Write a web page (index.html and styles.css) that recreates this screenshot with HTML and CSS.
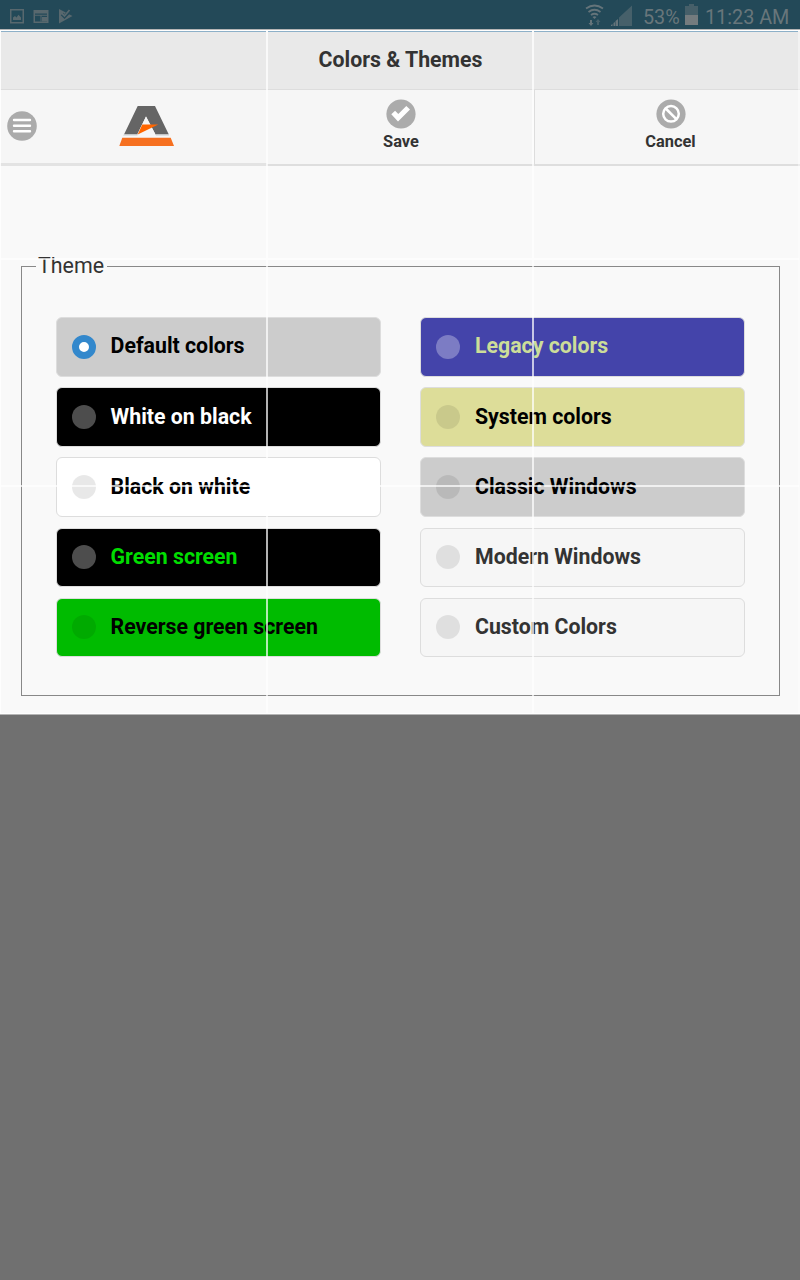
FILE: index.html
```html
<!DOCTYPE html>
<html lang="en">
<head>
<meta charset="utf-8">
<title>Colors &amp; Themes</title>
<link rel="stylesheet" href="styles.css">
</head>
<body>
<div class="statusbar">
  <svg class="status-left" width="80" height="29" viewBox="0 0 80 29" fill="#58686e">
    <path fill-rule="evenodd" d="M10 9h14v14.500h-14zM11.500 10.500v11.500h11v-11.500zM13 20v-2.500l2-1.500 1.500 1.500 2-2.700 2.500 2.700v2.500z"/>
    <path fill-rule="evenodd" d="M33.500 10h15v13h-15zM35 13.500v8h12v-8z"/>
    <path d="M40.500 15h1v6.500h-1zM35 14.800h12v1H35zM42 17h5v4.500h-5z"/>
    <path d="M59 9L72.500 16 59 23.500z"/>
    <path fill="none" stroke="#234958" stroke-width="3.500" d="M62 14l2.500 2.500 6-6"/>
    <path fill="none" stroke="#58686e" stroke-width="1.800" d="M61.500 13l3 3 5-6"/>
  </svg>
  <div class="status-right">
    <svg width="50" height="29" viewBox="0 0 50 29">
      <g fill="none" stroke="#65747a" stroke-width="1.800">
        <path d="M1 8.500q8.500-6 17 0M3.500 12q6-4.500 12 0M6 15q3.500-2.500 7 0"/>
      </g>
      <path fill="#65747a" d="M7.500 17q2-1.500 4 0l-2 2zM5 20h2v3h1.500L6 26l-2.500-3H5zM26 26v-1l1.500-1v2zM28.500 26v-3l1.500-1v4zM30.500 26v-5l2.500-2v7z"/>
      <path fill="#46606a" d="M12 25h2v-3h1.500L13 19l-2.500 3H12zM34 26v-8.500L47 5.500V26z"/>
    </svg>
    <span class="percent">53%</span>
    <svg class="battery" width="13" height="29" viewBox="0 0 13 29">
      <path fill="#465f69" d="M0 6h4V4h5v2h4v9H0z"/><path fill="#747b7e" d="M0 15h13v10H0z"/>
    </svg>
    <span class="clock">11:23 AM</span>
  </div>
</div>
<div class="window">
  <header class="title">Colors &amp; Themes</header>
  <nav class="toolbar">
    <div class="tool brand">
      <svg class="menu" width="30" height="30" viewBox="0 0 30 30"><circle cx="15" cy="15" r="14.800" fill="#ababab"/><path d="M7 9h16M7 14.800h16M7 20.300h16" stroke="#fff" stroke-width="2.400" stroke-linecap="round"/></svg>
      <svg class="logo" width="56" height="42" viewBox="119 105 56 42">
        <path fill="#656565" d="M137.700 106h17.300l13.800 28.500h-13.300L146 116.500l-8.700 18H124z"/>
        <path fill="#f5f5f5" d="M146 116.500l-8.700 18h18.200z"/>
        <path fill="#d9dddf" d="M123.500 134.500h14v1.300h-14.500zM155.500 134.500h13.500v1.300h-13z"/>
        <path fill="#ff6600" d="M142.300 124.500h16L137.700 134.500z"/>
        <path fill="#f67020" d="M122.300 137.800h48.400l3.300 8.200h-54.700z"/>
      </svg>
    </div>
    <div class="tool save">
      <svg width="30" height="30" viewBox="0 0 30 30"><circle cx="15" cy="15" r="14.600" fill="#ababab"/><path fill="#fff" d="M5.300 15.200l3.800-3.500 3.200 3.300 8-8 3.700 3.600-12 11.900z"/></svg>
      <span>Save</span>
    </div>
    <div class="tool cancel">
      <svg width="30" height="30" viewBox="0 0 30 30"><circle cx="15" cy="15" r="14.600" fill="#ababab"/><circle cx="15" cy="14.800" r="7.800" fill="none" stroke="#fff" stroke-width="2.500"/><path d="M9.700 9.500l10.700 10.700" stroke="#fff" stroke-width="2.600"/></svg>
      <span>Cancel</span>
    </div>
  </nav>
  <fieldset class="themes">
    <legend>Theme</legend>
    <div class="columns">
      <div class="column">
        <div class="option classic selected"><i></i>Default colors</div>
        <div class="option black"><i></i>White on black</div>
        <div class="option white"><i></i>Black on white</div>
        <div class="option black greentext"><i></i>Green screen</div>
        <div class="option green"><i></i>Reverse green screen</div>
      </div>
      <div class="column second">
        <div class="option legacy"><i></i>Legacy colors</div>
        <div class="option system"><i></i>System colors</div>
        <div class="option classic"><i></i>Classic Windows</div>
        <div class="option"><i></i>Modern Windows</div>
        <div class="option"><i></i>Custom Colors</div>
      </div>
    </div>
  </fieldset>
  <svg class="seams" width="800" height="686" viewBox="0 29 800 686">
    <path fill="#fff" fill-opacity=".7" d="M266 31h2v682h-2zM532 31h2v682h-2zM1 258h798v2H1zM1 485h798v2H1z"/>
    <path fill="#fff" fill-opacity=".85" d="M0 30h800v1H0zM0 30h1v683H0zM798.500 30h1v683h-1zM0 713h800v1H0z"/>
    <path fill="#b5b5b5" d="M0 29h800v1H0zM0 714h800v1H0z"/>
    <path fill="#8db0c8" d="M1 31h265v1H1zM268 31h264v1H268zM534 31h264v1H534z"/>
  </svg>
</div>
</body>
</html>
```
FILE: styles.css
```css
* { box-sizing: border-box; }
body { margin: 0; height: 1280px; overflow: hidden; background: #707070; font-family: Roboto, sans-serif; color: #333; }
.statusbar { height: 29px; background: #234958; color: #68767b; display: flex; justify-content: space-between; }
.statusbar svg { display: block; }
.status-right { display: flex; align-items: flex-start; width: 215px; font-size: 19.800px; line-height: 35px; white-space: nowrap; }
.percent { margin-left: 8px; width: 42px; }
.clock { margin-left: 7px; }
.window { position: relative; height: 686px; background: #f9f9f9; overflow: hidden; }
.title { margin-top: 2px; height: 59px; padding-left: 1px; background: #e9e9e9; border-bottom: 1px solid #ddd; text-align: center; font-size: 21.300px; font-weight: 700; line-height: 57px; }
.toolbar { display: grid; grid-template-columns: 267px 268px 265px; height: 76px; }
.tool { height: 76px; display: flex; flex-direction: column; align-items: center; padding-top: 9px; background: #f6f6f6; border-bottom: 2px solid #dedede; font-size: 16.400px; font-weight: 700; }
.save { border-right: 1px solid #ddd; padding-left: 1px; }
.cancel { padding-left: 6px; }
.tool svg { display: block; }
.tool span { line-height: 19px; margin-top: 3px; }
.brand { height: 76px; flex-direction: row; padding: 0 0 1px 7px; border-bottom: 3px solid #e3e3e3; }
.logo { margin-left: 82px; }
.themes { margin: 88px 20px 0 21px; padding: 0 34px; height: 442px; border: 1px solid #888; }
.themes legend { height: 25px; line-height: 23px; margin-left: -20px; padding: 0 3px 0 2px; font-size: 21.400px; }
.columns { display: grid; grid-template-columns: 325px 325px; column-gap: 39px; padding-top: 38px; }
.column { display: flex; flex-direction: column; gap: 10.600px; }
.option { height: 59.600px; display: flex; align-items: center; padding: 0 15px 1.800px; border: 1px solid #ddd; border-radius: 6px; background: #f6f6f6; font-size: 21.300px; font-weight: 700; white-space: nowrap; }
.option i { width: 24px; height: 24px; border-radius: 50%; background: rgba(0,0,0,.09); margin: 1.600px 14.600px 0 0; }
.second .option i { margin-right: 15px; }
.classic { background: #ccc; color: #000; }
.selected i { background: #fff; border: 7px solid #3388cc; }
.black { background: #000; color: #fff; }
.black i { background: #4d4d4d; }
.white { background: #fff; color: #000; }
.greentext { color: #00dd00; }
.green { background: #00bb00; color: #000; }
.legacy { background: #4444aa; color: #ccdd99; }
.legacy i { background: #7c7cc4; }
.system { background: #dddd99; color: #000; }
.seams { position: absolute; left: 0; top: 0; pointer-events: none; }
```
